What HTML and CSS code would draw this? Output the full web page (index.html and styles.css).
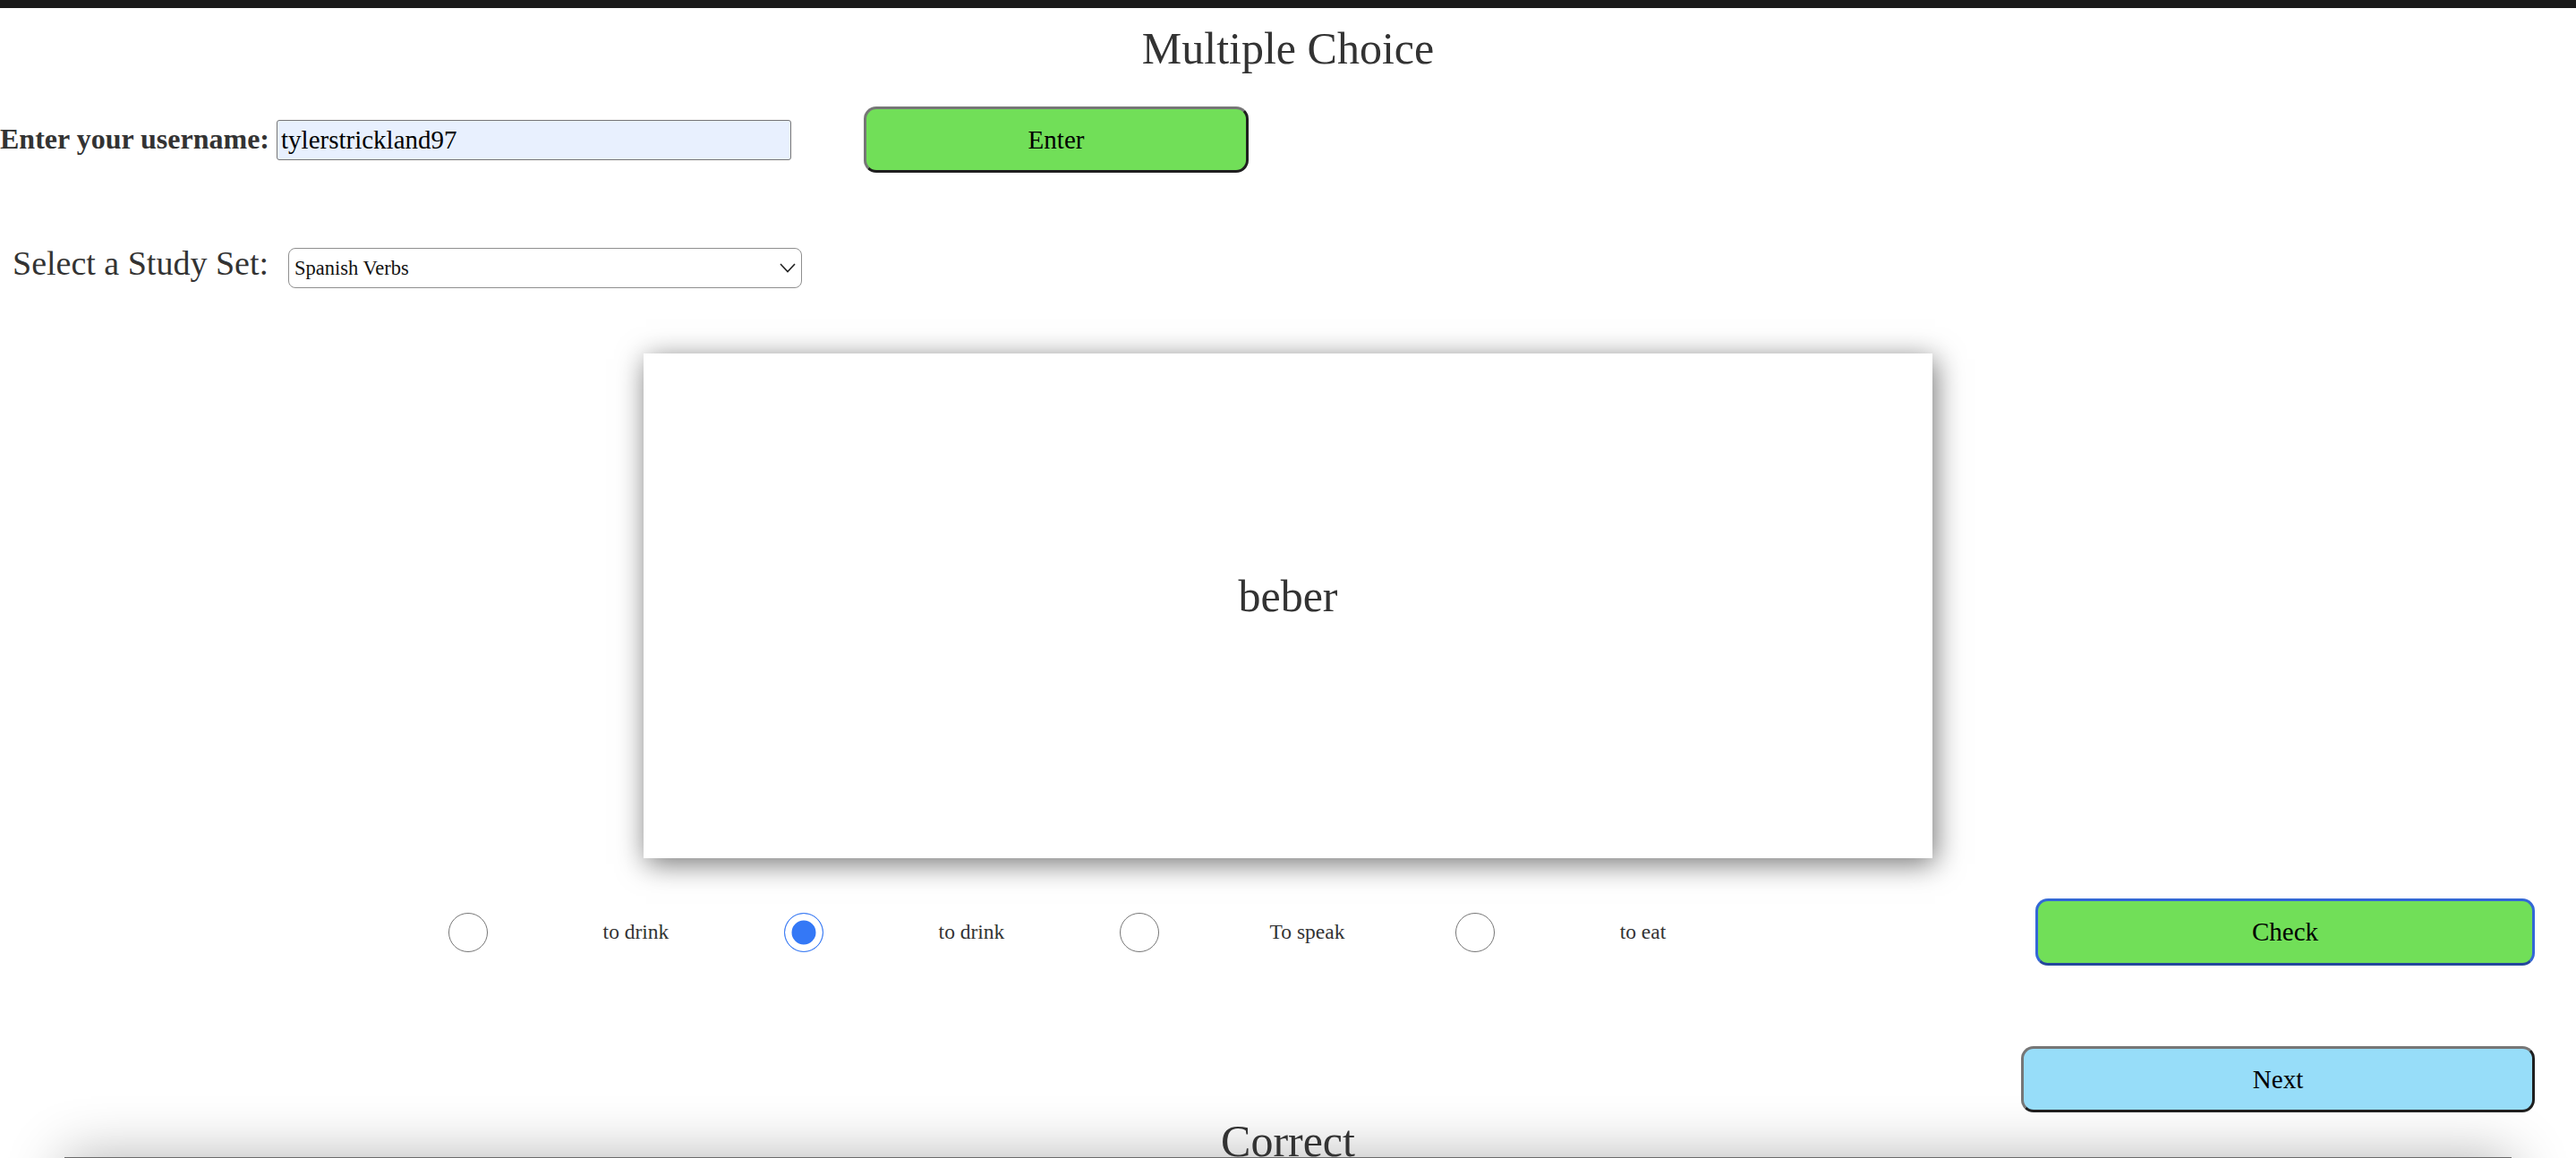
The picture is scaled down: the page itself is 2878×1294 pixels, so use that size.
FILE: index.html
```html
<!DOCTYPE html>
<html lang="en">
<head>
<meta charset="utf-8">
<title>Multiple Choice</title>
<link rel="stylesheet" href="styles.css">
</head>
<body>
<div class="topbar"></div>
<h1 class="title">Multiple Choice</h1>

<div class="user-row">
  <label class="user-label" for="username">Enter your username:</label>
  <input class="user-input" id="username" type="text" value="tylerstrickland97">
  <button class="btn btn-enter">Enter</button>
</div>

<div class="set-row">
  <label class="set-label" for="studyset">Select a Study Set:</label>
  <div class="select-wrap">
    <select class="set-select" id="studyset">
      <option>Spanish Verbs</option>
    </select>
    <svg class="chevron" width="18" height="11" viewBox="0 0 18 11"><path d="M1 1 L9 9.5 L17 1" fill="none" stroke="#222" stroke-width="1.6"/></svg>
  </div>
</div>

<div class="card">
  <div class="card-word">beber</div>
</div>

<div class="answer-row">
  <div class="options">
    <div class="option"><input class="radio" type="radio" name="ans"><span class="opt-label">to drink</span></div>
    <div class="option"><input class="radio" type="radio" name="ans" checked><span class="opt-label">to drink</span></div>
    <div class="option"><input class="radio" type="radio" name="ans"><span class="opt-label">To speak</span></div>
    <div class="option"><input class="radio" type="radio" name="ans"><span class="opt-label">to eat</span></div>
  </div>
  <button class="btn btn-check">Check</button>
</div>

<div class="next-row">
  <button class="btn btn-next">Next</button>
</div>

<div class="result">Correct</div>
<div class="result-card"></div>
</body>
</html>
```
FILE: styles.css
```css
html, body {
  margin: 0;
  padding: 0;
  background: #ffffff;
}
body {
  font-family: "Liberation Serif", "Times New Roman", serif;
  color: #333333;
  overflow: hidden;
}
.topbar {
  height: 9px;
  background: #1a1a1a;
}
.title {
  margin: 16px 0 0;
  font-size: 50px;
  line-height: 58px;
  font-weight: normal;
  text-align: center;
  color: #333333;
}

/* username row */
.user-row {
  display: flex;
  align-items: baseline;
  margin-top: 36px;
}
.user-label {
  font-size: 32px;
  font-weight: bold;
  color: #333333;
}
.user-input {
  box-sizing: border-box;
  width: 575px;
  height: 45px;
  margin-left: 8px;
  padding: 0 4px;
  border: 1px solid #767676;
  border-radius: 3px;
  background: #e8f0fe;
  font-family: "Liberation Serif", serif;
  font-size: 29px;
  color: #000000;
}
.btn {
  box-sizing: border-box;
  font-family: "Liberation Serif", serif;
  font-size: 29px;
  color: #000000;
  border-radius: 14px;
  border: 3px solid;
  border-color: #767676 #1f1f1f #1f1f1f #767676;
  padding: 0;
}
.btn-enter {
  width: 430px;
  height: 74px;
  margin-left: 81px;
  background: #71df58;
}

/* study set row */
.set-row {
  display: flex;
  align-items: baseline;
  margin-top: 79px;
}
.set-label {
  margin-left: 14px;
  font-size: 38px;
  color: #333333;
}
.select-wrap {
  position: relative;
  margin-left: 22px;
}
.set-select {
  box-sizing: border-box;
  width: 574px;
  height: 45px;
  padding: 0 0 0 6px;
  border: 1px solid #8f8f8f;
  border-radius: 8px;
  background: #ffffff;
  -webkit-appearance: none;
  appearance: none;
  font-family: "Liberation Serif", serif;
  font-size: 22.5px;
  color: #111111;
}
.chevron {
  position: absolute;
  right: 7px;
  top: 17px;
  pointer-events: none;
}

/* flash card */
.card {
  box-sizing: border-box;
  width: 1440px;
  height: 564px;
  margin: 73px auto 0;
  background: #ffffff;
  box-shadow: 3px 6px 30px rgba(0, 0, 0, 0.55);
  display: flex;
  align-items: center;
  justify-content: center;
  padding-bottom: 22px;
}
.card-word {
  font-size: 50px;
  color: #333333;
}

/* answers */
.answer-row {
  display: flex;
  align-items: center;
  margin-top: 45px;
}
.options {
  display: flex;
  align-items: center;
  margin-left: 501px;
}
.option {
  display: flex;
  align-items: center;
}
.radio {
  -webkit-appearance: none;
  appearance: none;
  box-sizing: border-box;
  width: 44px;
  height: 44px;
  margin: 0;
  border: 1.5px solid #767676;
  border-radius: 50%;
  background: #ffffff;
}
.radio:checked {
  border-color: #3a7bf4;
  background: #3478f6;
  box-shadow: inset 0 0 0 7.5px #ffffff;
}
.opt-label {
  width: 331px;
  text-align: center;
  font-size: 23.5px;
  color: #333333;
}
.btn-check {
  width: 558px;
  height: 75px;
  margin-left: auto;
  margin-right: 46px;
  background: #71df58;
  border-color: #3367d6 #3367d6 #24479c #3367d6;
}

.next-row {
  display: flex;
  justify-content: flex-end;
  margin-top: 90px;
}
.btn-next {
  width: 574px;
  height: 74px;
  margin-right: 46px;
  background: #97ddf9;
}

.result {
  margin-top: 14px;
  font-size: 50px;
  line-height: 36px;
  text-align: center;
  color: #333333;
}
.result-card {
  width: 95%;
  height: 300px;
  margin: 0 auto;
  background: #ffffff;
  border-top: 1px solid #6b6b6b;
  box-shadow: 0 0 60px rgba(0, 0, 0, 0.3);
}
```
